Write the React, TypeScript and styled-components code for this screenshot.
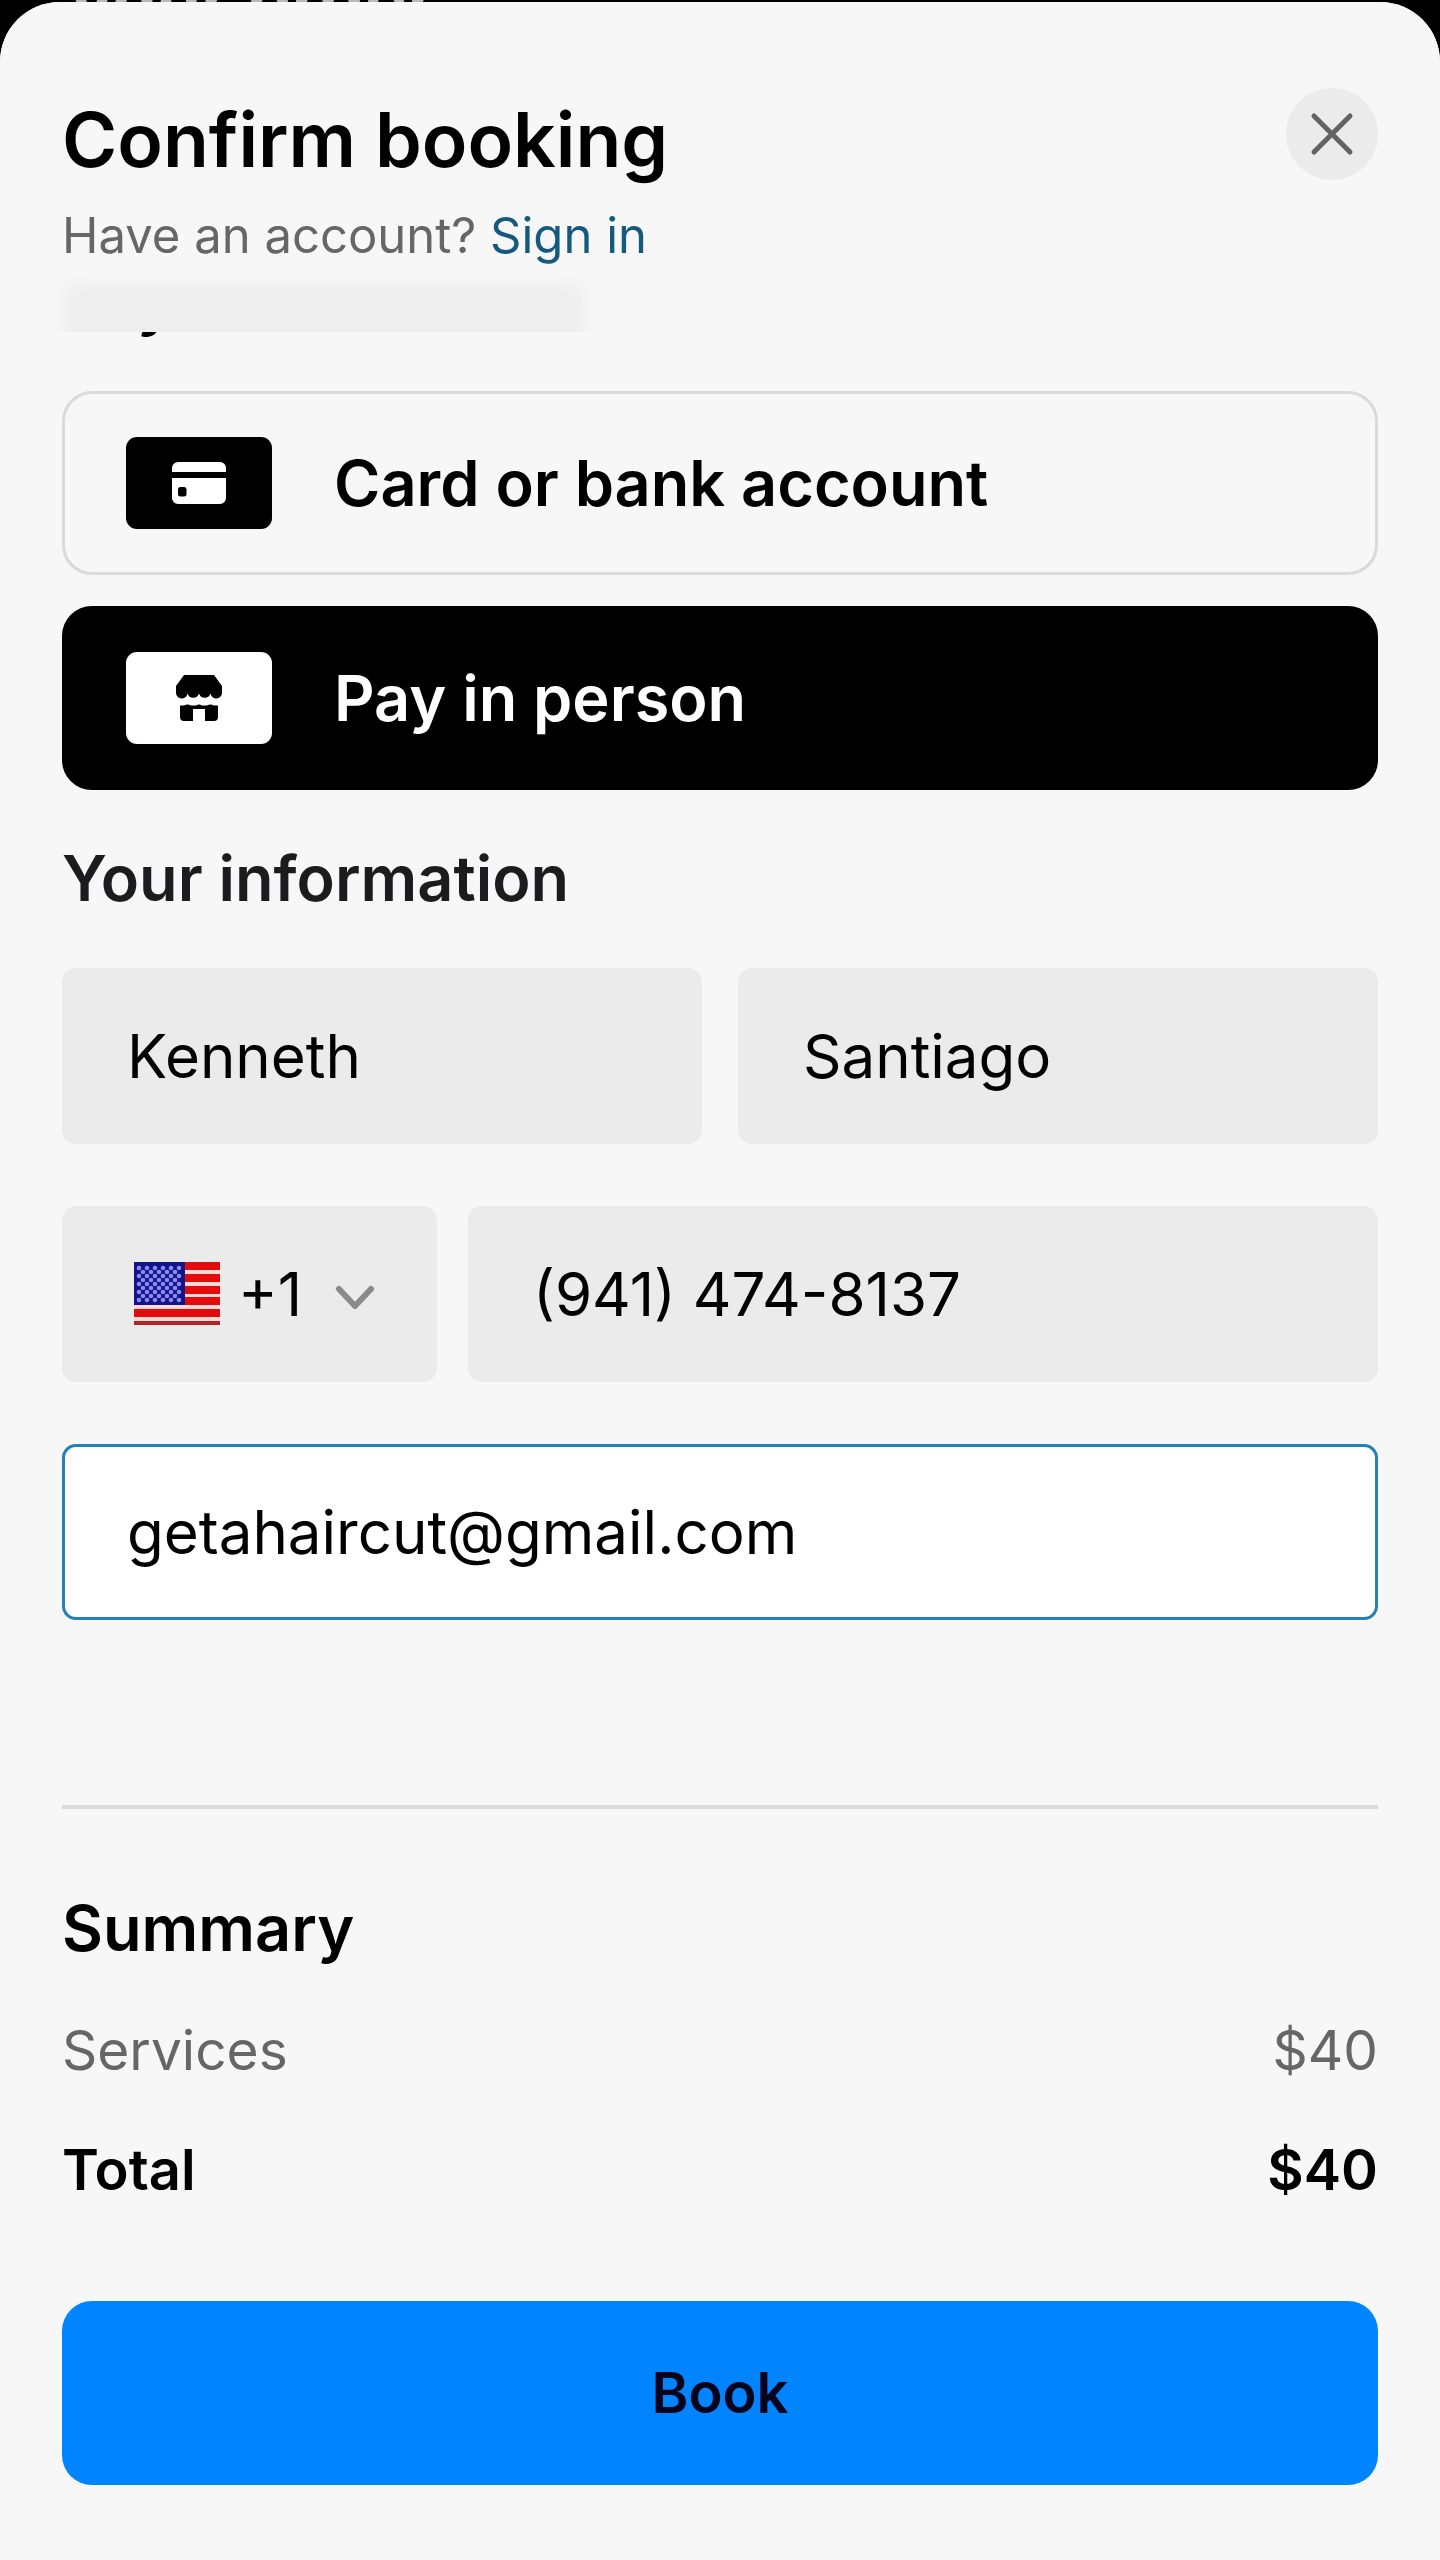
import React, { useState } from "react";
import styled, { createGlobalStyle } from "styled-components";

const GlobalStyle = createGlobalStyle`
  *, *::before, *::after { box-sizing: border-box; }
  body {
    margin: 0;
    background: #000;
    color: #000;
    font-family: Inter, Roboto, "Liberation Sans", sans-serif;
  }
  input, select, button { font: inherit; color: inherit; }
`;

const Page = styled.div`
  min-height: 100vh;
  display: flex;
  flex-direction: column;
`;

const Backdrop = styled.div`
  height: 2px;
  padding: 0 70px;
  overflow: hidden;
  display: flex;
  align-items: center;
  color: #b9b9b9;
  font-size: 72px;
  font-weight: 700;
  line-height: 80px;
`;

const Sheet = styled.form`
  flex: 1;
  background: #f7f7f7;
  border-radius: 60px 60px 0 0;
`;

const Header = styled.header`
  position: sticky;
  top: 0;
  z-index: 1;
  display: flex;
  justify-content: space-between;
  align-items: flex-start;
  padding: 86px 62px 66px;
  border-radius: 60px 60px 0 0;
  overflow: hidden;
  background: #f7f7f7;

  /* soft shade of the heading that scrolls beneath the header */
  &::after {
    content: "";
    position: absolute;
    left: 64px;
    bottom: -12px;
    width: 520px;
    height: 60px;
    border-radius: 12px;
    background: #eeeeee;
    filter: blur(6px);
  }
`;

const Heading = styled.div`
  display: flex;
  flex-direction: column;
  gap: 14px;
`;

const Title = styled.h1`
  margin: 0;
  font-size: 75px;
  font-weight: 600;
  line-height: 104px;
`;

const Subtitle = styled.p`
  margin: 0;
  font-size: 49px;
  line-height: 60px;
  color: #666;
`;

const SignIn = styled.a`
  color: #15597f;
  text-decoration: none;
`;

const CloseButton = styled.button`
  display: grid;
  place-items: center;
  width: 92px;
  height: 92px;
  padding: 0;
  border: 0;
  border-radius: 50%;
  background: #ebebeb;
  color: #636363;
`;

const Body = styled.main`
  padding: 0 62px 75px;
`;

const SectionTitle = styled.h2<{ $tone?: string }>`
  margin: 0 0 50px;
  font-size: 63px;
  font-weight: 600;
  line-height: 80px;
  color: ${(p) => p.$tone ?? "#000"};
`;

const Payment = styled.section`
  margin-top: -71px;
`;

const Options = styled.div`
  display: flex;
  flex-direction: column;
  gap: 31px;
`;

const Option = styled.label<{ $selected: boolean }>`
  display: flex;
  align-items: center;
  gap: 62px;
  height: 184px;
  padding: 0 61px;
  border: 3px solid ${(p) => (p.$selected ? "#000" : "#dadada")};
  border-radius: 30px;
  background: ${(p) => (p.$selected ? "#000" : "transparent")};
  color: ${(p) => (p.$selected ? "#fff" : "#000")};
  font-size: 63px;
  font-weight: 600;
`;

const OptionBadge = styled.span<{ $selected: boolean }>`
  display: grid;
  place-items: center;
  width: 146px;
  height: 92px;
  border-radius: 11px;
  background: ${(p) => (p.$selected ? "#fff" : "#000")};
  color: ${(p) => (p.$selected ? "#000" : "#fff")};
`;

const HiddenRadio = styled.input`
  position: absolute;
  width: 1px;
  height: 1px;
  margin: 0;
  opacity: 0;
`;

const Information = styled.section`
  margin-top: 48px;
`;

const Fields = styled.div`
  display: flex;
  flex-direction: column;
  gap: 62px;
`;

const FieldRow = styled.div<{ $columns: string; $gap: number }>`
  display: grid;
  grid-template-columns: ${(p) => p.$columns};
  gap: ${(p) => p.$gap}px;
`;

const TextField = styled.input<{ $active?: boolean }>`
  width: 100%;
  min-width: 0;
  height: 176px;
  padding: 0 62px;
  border: 3px solid ${(p) => (p.$active ? "#2380b8" : "#ebebeb")};
  border-radius: 14px;
  outline: none;
  background: ${(p) => (p.$active ? "#fff" : "#ebebeb")};
  font-size: 60px;
`;

const CountryField = styled.div`
  display: flex;
  align-items: center;
  height: 176px;
  padding: 0 62px 0 72px;
  border-radius: 14px;
  background: #ebebeb;
  font-size: 60px;
`;

const CountrySelect = styled.select`
  flex: 1;
  min-width: 0;
  padding: 0 0 0 18px;
  border: 0;
  outline: none;
  appearance: none;
  background: transparent;
`;

const Divider = styled.hr`
  height: 4px;
  margin: 185px 0 79px;
  border: 0;
  background: #dcdcdc;
`;

const SummaryList = styled.dl`
  display: flex;
  flex-direction: column;
  gap: 40px;
  margin: -8px 0 91px;
`;

const SummaryRow = styled.div<{ $total?: boolean }>`
  display: flex;
  justify-content: space-between;
  font-size: ${(p) => (p.$total ? 56 : 55)}px;
  line-height: 80px;
  font-weight: ${(p) => (p.$total ? 600 : 400)};
  color: ${(p) => (p.$total ? "#000" : "#666")};

  dd { margin: 0; }
`;

const BookButton = styled.button`
  display: block;
  width: 100%;
  height: 184px;
  border: 0;
  border-radius: 30px;
  background: #0084ff;
  color: #04041a;
  font-size: 56px;
  font-weight: 600;
`;

const CloseIcon = () => (
  <svg width="44" height="44" viewBox="0 0 44 44" fill="none" stroke="currentColor" strokeWidth="5" strokeLinecap="round" aria-hidden="true">
    <path d="M4 4 40 40M40 4 4 40" />
  </svg>
);

const CardIcon = () => (
  <svg width="54" height="42" viewBox="0 0 54 42" aria-hidden="true">
    <path fill="currentColor" d="M6 0h42a6 6 0 0 1 6 6v4H0V6a6 6 0 0 1 6-6Z" />
    <path fill="currentColor" fillRule="evenodd" d="M0 16h54v20a6 6 0 0 1-6 6H6a6 6 0 0 1-6-6Zm8.500 9a2.500 2.500 0 0 0-2.500 2.500v4.500a2.500 2.500 0 0 0 2.500 2.500h3.500a2.500 2.500 0 0 0 2.500-2.500v-4.500a2.500 2.500 0 0 0-2.500-2.500Z" />
  </svg>
);

const StoreIcon = () => (
  <svg width="46" height="46" viewBox="0 0 46 46" fill="currentColor" aria-hidden="true">
    <path d="M8 0h30l8 11v6a5.800 5.800 0 0 1-11.500 1.500 6 6 0 0 1-11.500 0 6 6 0 0 1-11.500 0A5.800 5.800 0 0 1 0 17v-6Z" />
    <path d="M4 30.500h4q3.500-2 7 0h5q3-2 6 0h5q3.500-2 7 0h4V42a4 4 0 0 1-4 4h-9V34H17v12H8a4 4 0 0 1-4-4Z" />
  </svg>
);

const ChevronIcon = () => (
  <svg width="40" height="36" viewBox="0 0 40 36" fill="none" stroke="#8a8a8a" strokeWidth="6" strokeLinecap="round" strokeLinejoin="round" aria-hidden="true">
    <path d="M4 13 20 30 36 13" />
  </svg>
);

const STRIPES = [0, 12, 24, 35, 47];
const STAR_ROWS = [6, 10, 14, 18, 22, 26, 30, 34, 38];

const FlagIcon = () => (
  <svg width="86" height="64" viewBox="0 0 86 64" aria-hidden="true">
    <rect width="86" height="63" fill="#fbd9d7" />
    {STRIPES.map((y) => (
      <rect key={y} y={y} width="86" height="8" fill="#e30b0b" />
    ))}
    <rect y="59" width="86" height="4" fill="#b02525" />
    <rect width="51" height="43" fill="#14128a" />
    {STAR_ROWS.map((y, row) =>
      (row % 2 ? [9, 17, 25, 33, 41] : [5, 13, 21, 29, 37, 45]).map((x) => (
        <circle key={`${x}-${y}`} cx={x} cy={y} r="2.300" fill="#8a8aee" />
      ))
    )}
  </svg>
);

const PAYMENT_OPTIONS = [
  { id: "card", label: "Card or bank account", Icon: CardIcon },
  { id: "person", label: "Pay in person", Icon: StoreIcon },
];

export default function App() {
  const [method, setMethod] = useState("person");

  return (
    <>
      <GlobalStyle />
      <Page>
        <Backdrop aria-hidden="true">your order</Backdrop>
        <Sheet onSubmit={(e) => e.preventDefault()}>
          <Header>
            <Heading>
              <Title>Confirm booking</Title>
              <Subtitle>
                Have an account? <SignIn href="#sign-in">Sign in</SignIn>
              </Subtitle>
            </Heading>
            <CloseButton type="button" aria-label="Close">
              <CloseIcon />
            </CloseButton>
          </Header>

          <Body>
            <Payment>
              <SectionTitle>Payment method</SectionTitle>
              <Options>
                {PAYMENT_OPTIONS.map(({ id, label, Icon }) => (
                  <Option key={id} $selected={method === id}>
                    <HiddenRadio
                      type="radio"
                      name="method"
                      checked={method === id}
                      onChange={() => setMethod(id)}
                    />
                    <OptionBadge $selected={method === id}>
                      <Icon />
                    </OptionBadge>
                    {label}
                  </Option>
                ))}
              </Options>
            </Payment>

            <Information>
              <SectionTitle $tone="#1c1c1e">Your information</SectionTitle>
              <Fields>
                <FieldRow $columns="1fr 1fr" $gap={36}>
                  <TextField aria-label="First name" defaultValue="Kenneth" />
                  <TextField aria-label="Last name" defaultValue="Santiago" />
                </FieldRow>
                <FieldRow $columns="375px 1fr" $gap={31}>
                  <CountryField>
                    <FlagIcon />
                    <CountrySelect aria-label="Country code" defaultValue="+1">
                      <option value="+1">+1</option>
                    </CountrySelect>
                    <ChevronIcon />
                  </CountryField>
                  <TextField aria-label="Phone number" type="tel" defaultValue="(941) 474-8137" />
                </FieldRow>
                <TextField aria-label="Email" type="email" $active defaultValue="getahaircut@gmail.com" />
              </Fields>
            </Information>

            <Divider />

            <section>
              <SectionTitle>Summary</SectionTitle>
              <SummaryList>
                <SummaryRow>
                  <dt>Services</dt>
                  <dd>$40</dd>
                </SummaryRow>
                <SummaryRow $total>
                  <dt>Total</dt>
                  <dd>$40</dd>
                </SummaryRow>
              </SummaryList>
            </section>

            <BookButton type="submit">Book</BookButton>
          </Body>
        </Sheet>
      </Page>
    </>
  );
}
